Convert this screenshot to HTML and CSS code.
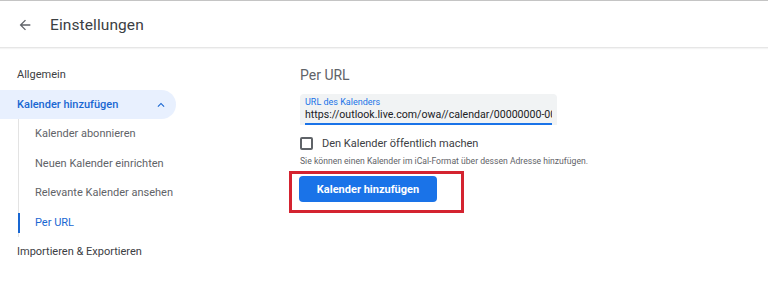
FILE: index.html
```html
<!DOCTYPE html>
<html lang="de">
<head>
<meta charset="utf-8">
<link rel="stylesheet" href="styles.css">
</head>
<body>
<header class="topbar">
  <svg class="back" viewBox="0 0 24 24" width="16" height="16"><path d="M20 11H7.830l5.59-5.59L12 4l-8 8 8 8 1.41-1.41L7.83 13H20v-2z" fill="#5f6368"/></svg>
  <h1 class="title">Einstellungen</h1>
</header>
<div class="layout">
  <nav class="sidebar">
    <div class="nav-item">Allgemein</div>
    <div class="nav-item nav-open">
      <span>Kalender hinzufügen</span>
      <svg class="chev" viewBox="0 0 24 24" width="14" height="14"><path d="M12 8l-6 6 1.41 1.41L12 10.83l4.590 4.58L18 14z" fill="#1967d2"/></svg>
    </div>
    <div class="subnav">
      <div class="sub-item">Kalender abonnieren</div>
      <div class="sub-item">Neuen Kalender einrichten</div>
      <div class="sub-item">Relevante Kalender ansehen</div>
      <div class="sub-item sub-active">Per URL</div>
    </div>
    <div class="nav-item">Importieren &amp; Exportieren</div>
  </nav>
  <main class="content">
    <h2 class="section-title">Per URL</h2>
    <div class="field">
      <div class="field-inner">
        <div class="field-label">URL des Kalenders</div>
        <div class="field-value">https://outlook.live.com/owa//calendar/00000000-000</div>
      </div>
    </div>
    <label class="check-row">
      <span class="checkbox"></span>
      <span>Den Kalender öffentlich machen</span>
    </label>
    <p class="hint">Sie können einen Kalender im iCal-Format über dessen Adresse hinzufügen.</p>
    <div class="highlight">
      <button class="primary">Kalender hinzufügen</button>
    </div>
  </main>
</div>
</body>
</html>
```
FILE: styles.css
```css
* { box-sizing: border-box; }
html, body { margin: 0; padding: 0; background: #fff; }
body {
  font-family: Roboto, "Noto Sans", Arial, sans-serif;
  color: #3c4043;
  border-top: 1px solid #c4c4c4;
  height: 283px;
  overflow: hidden;
}
.topbar {
  height: 47px;
  padding-top: 2px;
  display: flex;
  align-items: center;
  border-bottom: 1px solid #e6e6e6;
  box-shadow: 0 1px 1px #f4f4f4;
}
.back { margin-left: 17px; margin-top: -1px; }
.title {
  margin: 0 0 0 17px;
  font-size: 15.5px;
  font-weight: 400;
  color: #3c4043;
  letter-spacing: 0.1px;
}
.layout { display: flex; }
.sidebar {
  width: 176px;
  padding-top: 12px;
  font-size: 11px;
}
.nav-item {
  height: 29.5px;
  display: flex;
  align-items: center;
  padding-left: 17px;
  color: #3c4043;
}
.nav-open {
  background: #e8f0fe;
  border-radius: 0 15px 15px 0;
  color: #1967d2;
  font-weight: 500;
  justify-content: space-between;
  padding-right: 8px;
}
.chev { margin-top: 1px; }
.subnav {
  margin-left: 18px;
  border-left: 1px solid #e3e3e3;
}
.sub-item {
  height: 29.5px;
  display: flex;
  align-items: center;
  padding-left: 16px;
  color: #5f6368;
  position: relative;
}
.sub-active { color: #1967d2; }
.sub-active::before {
  content: "";
  position: absolute;
  left: -1px;
  top: 5px;
  bottom: 4px;
  width: 2px;
  background: #1967d2;
}
.content {
  padding-left: 124px;
  padding-top: 17px;
}
.section-title {
  margin: 0;
  font-size: 14px;
  line-height: 20px;
  font-weight: 400;
  color: #5f6368;
}
.field {
  margin-top: 9px;
  width: 257px;
  height: 31px;
  background: #f1f3f4;
  border-radius: 4px 4px 0 0;
  padding: 0 5px;
}
.field-inner {
  height: 31px;
  border-bottom: 2px solid #1a73e8;
  padding-top: 3px;
}
.field-label {
  font-size: 9px;
  line-height: 11px;
  color: #1a73e8;
}
.field-value {
  font-size: 10.6px;
  line-height: 14px;
  color: #202124;
  white-space: nowrap;
  overflow: hidden;
}
.check-row {
  display: flex;
  align-items: center;
  gap: 9px;
  margin-top: 12px;
  font-size: 11px;
  color: #3c4043;
}
.checkbox {
  width: 13px;
  height: 13px;
  border: 2px solid #5f6368;
  border-radius: 2px;
}
.hint {
  margin: 5px 0 0 0;
  font-size: 8.6px;
  line-height: 12px;
  color: #5f6368;
}
.highlight {
  display: inline-block;
  margin: 4px 0 0 -11px;
  border: 3px solid #d42330;
  padding: 2px 24px 8px 7px;
}
.primary {
  display: block;
  width: 138px;
  height: 26px;
  border: 0;
  border-radius: 4px;
  background: #1a73e8;
  color: #fff;
  font-family: Roboto, Arial, sans-serif;
  font-size: 11px;
  font-weight: 700;
  padding: 0;
}
```
